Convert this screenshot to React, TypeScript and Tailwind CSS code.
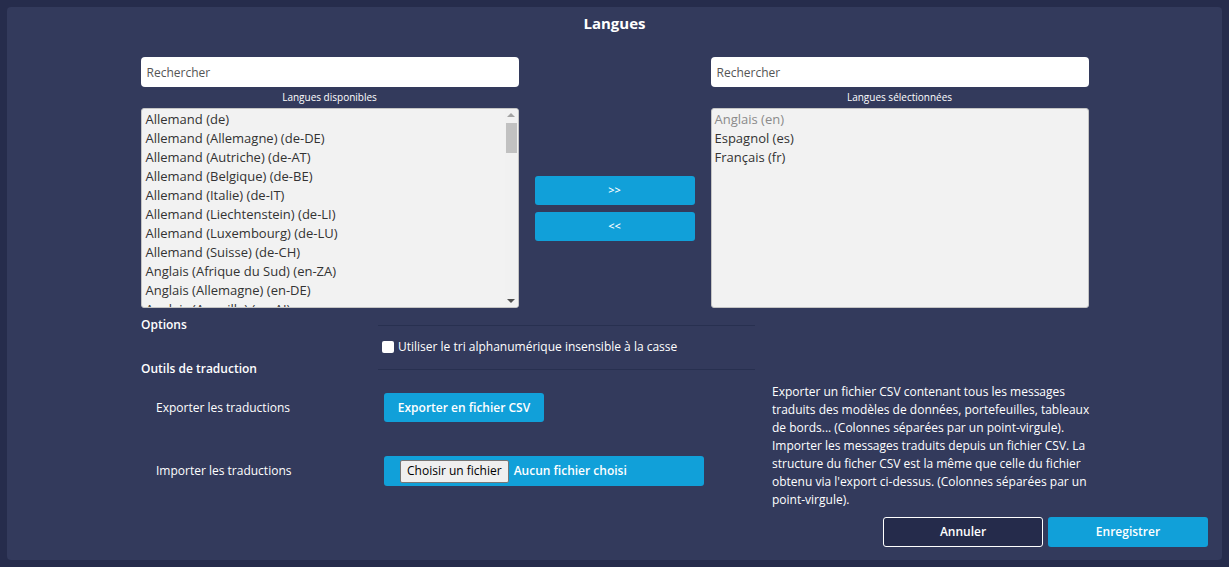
const available = [
  "Allemand (de)",
  "Allemand (Allemagne) (de-DE)",
  "Allemand (Autriche) (de-AT)",
  "Allemand (Belgique) (de-BE)",
  "Allemand (Italie) (de-IT)",
  "Allemand (Liechtenstein) (de-LI)",
  "Allemand (Luxembourg) (de-LU)",
  "Allemand (Suisse) (de-CH)",
  "Anglais (Afrique du Sud) (en-ZA)",
  "Anglais (Allemagne) (en-DE)",
  "Anglais (Anguilla) (en-AI)",
];

const selected = [
  { label: "Anglais (en)", disabled: true },
  { label: "Espagnol (es)", disabled: false },
  { label: "Français (fr)", disabled: false },
];

const helpLines = [
  "Exporter un fichier CSV contenant tous les messages",
  "traduits des modèles de données, portefeuilles, tableaux",
  "de bords... (Colonnes séparées par un point-virgule).",
  "Importer les messages traduits depuis un fichier CSV. La",
  "structure du ficher CSV est la même que celle du fichier",
  "obtenu via l'export ci-dessus. (Colonnes séparées par un",
  "point-virgule).",
];

function SearchInput() {
  return (
    <input
      type="text"
      placeholder="Rechercher"
      className="h-[30px] w-full rounded-[4px] bg-white px-[6px] text-[12px] text-[#333] outline-none placeholder:text-[#555]"
    />
  );
}

function Scrollbar() {
  return (
    <div className="flex w-[13px] shrink-0 flex-col items-center bg-[#f1f1f1] py-[4px]">
      <div className="h-0 w-0 border-x-[4px] border-b-[4px] border-x-transparent border-b-[#a3a3a3]" />
      <div className="mt-[6px] h-[30px] w-[11px] bg-[#c1c1c1]" />
      <div className="flex-1" />
      <div className="h-0 w-0 border-x-[4px] border-t-[4px] border-x-transparent border-t-[#505050]" />
    </div>
  );
}

export default function App() {
  return (
    <div className="min-h-screen bg-[#262c4c] p-[7px] font-['Open_Sans',sans-serif]">
      <div className="flex h-[553px] flex-col rounded-[4px] bg-[#333a5c] px-[14px] pb-[13px] pt-[4px]">
        <h1 className="text-center text-[15px] font-bold leading-[24px] text-white">Langues</h1>

        {/* dual list */}
        <div className="mx-auto mt-[22px] grid w-[948px] grid-cols-[378px_160px_378px] gap-x-[16px]">
          <SearchInput />
          <div />
          <SearchInput />

          <div className="py-[6px] text-center text-[10px] leading-[9px] text-white">Langues disponibles</div>
          <div />
          <div className="py-[6px] text-center text-[10px] leading-[9px] text-white">Langues sélectionnées</div>

          <div className="flex h-[200px] overflow-hidden rounded-[3px] border border-[#c4c4c4] bg-[#f2f2f2]">
            <ul className="flex-1 overflow-hidden pt-[1px]">
              {available.map((l) => (
                <li key={l} className="whitespace-nowrap px-[4px] text-[13px] leading-[19px] text-[#333]">
                  {l}
                </li>
              ))}
            </ul>
            <Scrollbar />
          </div>
          <div className="flex flex-col justify-center gap-[7px]">
            <button className="h-[29px] rounded-[3px] bg-[#11a0d9] text-[11px] font-semibold text-white">&gt;&gt;</button>
            <button className="h-[29px] rounded-[3px] bg-[#11a0d9] text-[11px] font-semibold text-white">&lt;&lt;</button>
          </div>
          <ul className="h-[200px] rounded-[3px] border border-[#c4c4c4] bg-[#f2f2f2] pt-[1px]">
            {selected.map((s) => (
              <li
                key={s.label}
                className={`px-[3px] text-[13px] leading-[19px] ${s.disabled ? "text-[#8a8a8a]" : "text-[#333]"}`}
              >
                {s.label}
              </li>
            ))}
          </ul>
        </div>

        {/* options + tools */}
        <div className="ml-[120px] mt-[7px] flex flex-col">
          <div className="flex h-[20px] w-[614px] items-center">
            <span className="w-[237px] text-[12px] font-semibold text-white">Options</span>
            <div className="h-px flex-1 bg-[#283050]" />
          </div>
          <label className="ml-[241px] flex h-[24px] items-center gap-[4px] text-[12px] text-white">
            <span className="h-[12px] w-[12px] rounded-[2px] bg-white" />
            Utiliser le tri alphanumérique insensible à la casse
          </label>
          <div className="flex h-[20px] w-[614px] items-center">
            <span className="w-[237px] text-[12px] font-semibold text-white">Outils de traduction</span>
            <div className="h-px flex-1 bg-[#283050]" />
          </div>

          <div className="mt-[4px] flex">
            <div className="flex w-[631px] flex-col gap-[34px] pt-[10px]">
              <div className="flex items-center">
                <span className="w-[243px] pl-[15px] text-[12px] text-white">Exporter les traductions</span>
                <button className="h-[29px] w-[160px] rounded-[3px] bg-[#11a0d9] text-[12px] font-semibold text-white">
                  Exporter en fichier CSV
                </button>
              </div>
              <div className="flex items-center">
                <span className="w-[243px] pl-[15px] text-[12px] text-white">Importer les traductions</span>
                <div className="flex h-[30px] w-[320px] items-center gap-[5px] rounded-[3px] bg-[#11a0d9] pl-[16px]">
                  <span className="flex h-[23px] items-center rounded-[2px] border border-[#767676] bg-[#efefef] px-[6px] text-[12px] text-black">
                    Choisir un fichier
                  </span>
                  <span className="text-[12px] font-semibold text-white">Aucun fichier choisi</span>
                </div>
              </div>
            </div>
            <p className="text-[12px] leading-[18px] text-white">
              {helpLines.map((l) => (
                <span key={l} className="block whitespace-nowrap">
                  {l}
                </span>
              ))}
            </p>
          </div>
        </div>

        <div className="mt-auto flex justify-end gap-[5px]">
          <button className="h-[30px] w-[160px] rounded-[3px] border border-white bg-[#252b4b] text-[12px] font-semibold text-white">
            Annuler
          </button>
          <button className="h-[30px] w-[160px] rounded-[3px] bg-[#11a0d9] text-[12px] font-semibold text-white">
            Enregistrer
          </button>
        </div>
      </div>
    </div>
  );
}
